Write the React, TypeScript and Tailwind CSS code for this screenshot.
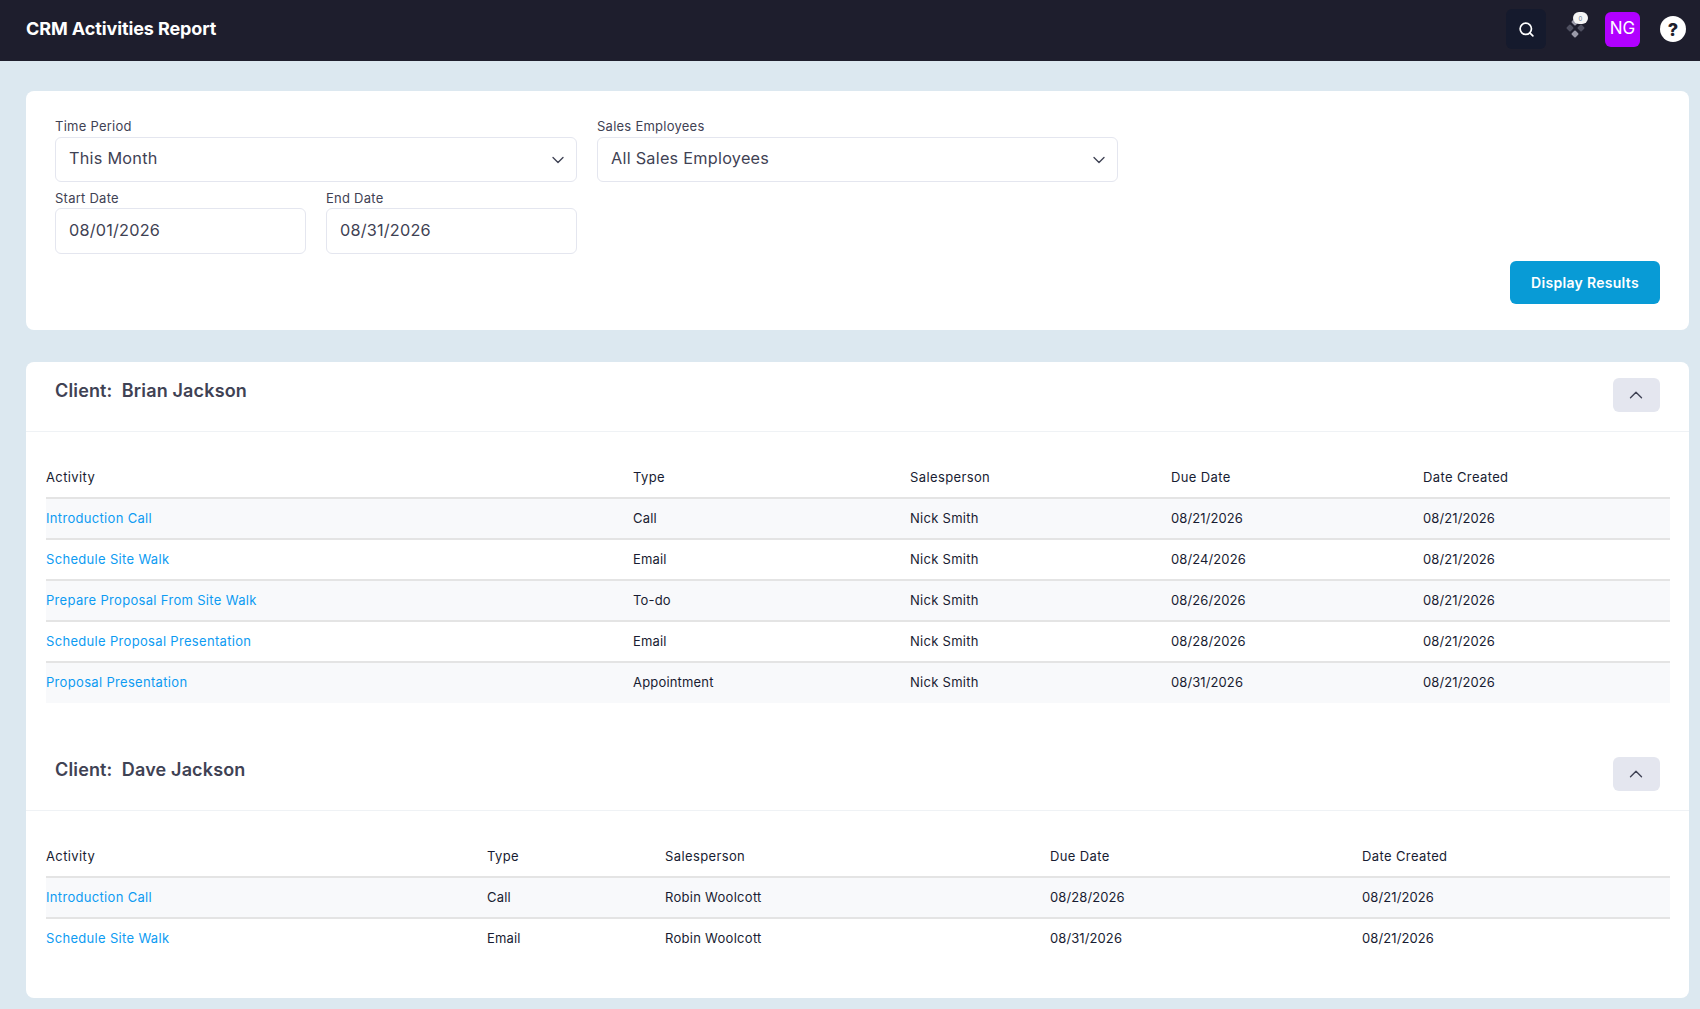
import React from "react";
import { ChevronDown, ChevronUp, Search } from "lucide-react";

const font = "font-['Inter','Liberation_Sans',sans-serif]";

type Row = [string, string, string, string, string];

const brian: Row[] = [
  ["Introduction Call", "Call", "Nick Smith", "08/21/2026", "08/21/2026"],
  ["Schedule Site Walk", "Email", "Nick Smith", "08/24/2026", "08/21/2026"],
  ["Prepare Proposal From Site Walk", "To-do", "Nick Smith", "08/26/2026", "08/21/2026"],
  ["Schedule Proposal Presentation", "Email", "Nick Smith", "08/28/2026", "08/21/2026"],
  ["Proposal Presentation", "Appointment", "Nick Smith", "08/31/2026", "08/21/2026"],
];
const dave: Row[] = [
  ["Introduction Call", "Call", "Robin Woolcott", "08/28/2026", "08/21/2026"],
  ["Schedule Site Walk", "Email", "Robin Woolcott", "08/31/2026", "08/21/2026"],
];

function SelectField({ label, value, className }: { label: string; value: string; className: string }) {
  return (
    <div className={className}>
      <div className="-mt-[1px] text-[13px] leading-[18px] tracking-[0.25px] text-[#3f4254]">{label}</div>
      <div className="mt-[2px] flex h-[45px] items-center justify-between rounded-[6px] border border-[#e4e6ef] bg-white pl-[13px] pr-[8px] text-[16.25px] tracking-[0.25px] text-[#3f4254]">
        <span className="pb-[2px]">{value}</span>
        <ChevronDown size={20} strokeWidth={1.6} className="text-[#3f4254]" />
      </div>
    </div>
  );
}

function DateField({ label, value }: { label: string; value: string }) {
  return (
    <div className="w-[251px]">
      <div className="text-[13px] leading-[18px] tracking-[0.25px] text-[#3f4254]">{label}</div>
      <div className="mt-[1px] flex h-[46px] items-center rounded-[6px] border border-[#e4e6ef] bg-white pl-[13px] text-[16.25px] tracking-[0.2px] text-[#3f4254]">
        <span className="pb-[1px]">{value}</span>
      </div>
    </div>
  );
}

function ActivityTable({ rows, cols }: { rows: Row[]; cols: number[] }) {
  return (
    <table className="w-full table-fixed border-collapse text-[13px] text-[#181c32]">
      <colgroup>
        {cols.map((w, i) => (
          <col key={i} style={{ width: w }} />
        ))}
      </colgroup>
      <thead>
        <tr className="h-[37px] border-b-2 border-[#e4e4e4]">
          {["Activity", "Type", "Salesperson", "Due Date", "Date Created"].map((h) => (
            <th key={h} className="p-0 pb-[2px] text-left font-normal tracking-[0.38px]">{h}</th>
          ))}
        </tr>
      </thead>
      <tbody>
        {rows.map((r, i) => (
          <tr key={i} className={`h-[41px] ${i < rows.length - 1 ? "border-b-2 border-[#e4e4e4]" : ""} ${i % 2 === 0 ? "bg-[#f8f9fb]" : "bg-white"}`}>
            <td className="p-0 tracking-[0.32px] text-[#0d9bf2]">{r[0]}</td>
            <td className="p-0 tracking-[0.18px]">{r[1]}</td>
            <td className="p-0 tracking-[0.28px]">{r[2]}</td>
            <td className="p-0 tracking-[0.1px]">{r[3]}</td>
            <td className="p-0 tracking-[0.1px]">{r[4]}</td>
          </tr>
        ))}
      </tbody>
    </table>
  );
}

function ClientHeader({ name }: { name: string }) {
  return (
    <div className="flex h-[70px] items-start justify-between border-b border-[#eff2f5] px-[29px]">
      <h3 className="mt-[16px] whitespace-pre text-[18px] font-semibold leading-[26px] tracking-[0.15px] text-[#3f4254]">{`Client:  ${name}`}</h3>
      <button className="mt-[16px] flex h-[34px] w-[47px] items-center justify-center rounded-[6px] bg-[#e4e6ef] pr-[1px] text-[#3f4254]">
        <ChevronUp size={22} strokeWidth={1.5} />
      </button>
    </div>
  );
}

export default function App() {
  return (
    <div className={`${font} min-h-[1009px] bg-[#dce8f0]`}>
      <header className="flex h-[61px] items-center justify-between bg-[#1e1e2d] pb-[3px] pl-[26px] pr-[14px]">
        <h1 className="-mt-[2px] text-[18px] font-bold tracking-[-0.1px] text-white">CRM Activities Report</h1>
        <div className="flex items-center">
          <button className="flex h-[40px] w-[40px] items-center justify-center rounded-[6px] bg-[#151a2d] text-white">
            <Search size={17} strokeWidth={2.4} />
          </button>
          <div className="relative ml-[14px] h-[32px] w-[32px]">
            <svg width="32" height="32" viewBox="0 0 32 32" className="absolute left-0 top-0">
              <rect x="12.25" y="6.25" width="5.5" height="5.5" rx="1" transform="rotate(45 15 9)" fill="#9a9aa8" />
              <rect x="7.25" y="12.25" width="5.5" height="5.5" rx="1" transform="rotate(45 10 15)" fill="#4f5060" />
              <rect x="18.25" y="12.25" width="5.5" height="5.5" rx="1" transform="rotate(45 21 15)" fill="#4f5060" />
              <rect x="12.25" y="18.25" width="5.5" height="5.5" rx="1" transform="rotate(45 15 21)" fill="#9a9aa8" />
            </svg>
            <span className="absolute left-[13px] top-[-1px] flex h-[12px] w-[15px] items-center justify-center rounded-full bg-[#f5f5f5] text-[6px] text-[#64748b]">0</span>
          </div>
          <div className="ml-[13px] flex h-[35px] w-[35px] items-center justify-center rounded-[6px] bg-[#b100ff] text-[17px] text-white">NG</div>
          <div className="ml-[20px] flex h-[26px] w-[26px] items-center justify-center rounded-full bg-white text-[18px] font-extrabold text-[#1e1e2d]">?</div>
        </div>
      </header>

      <main className="pl-[26px] pr-[11px] pt-[30px]">
        <section className="h-[239px] rounded-[8px] bg-white px-[29px] pt-[27px]">
          <div className="flex gap-[20px]">
            <div className="w-[522px]">
              <SelectField label="Time Period" value="This Month" className="w-full" />
              <div className="mt-[7px] flex gap-[20px]">
                <DateField label="Start Date" value="08/01/2026" />
                <DateField label="End Date" value="08/31/2026" />
              </div>
            </div>
            <SelectField label="Sales Employees" value="All Sales Employees" className="w-[521px]" />
          </div>
          <div className="mt-[7px] flex justify-end">
            <button className="h-[43px] w-[150px] rounded-[6px] bg-[#089bd6] pb-[1px] text-[14px] font-semibold tracking-[0.3px] text-white">Display Results</button>
          </div>
        </section>

        <section className="mt-[32px] h-[636px] rounded-[8px] bg-white">
          <ClientHeader name="Brian Jackson" />
          <div className="pl-[20px] pr-[19px] pt-[29px]">
            <ActivityTable rows={brian} cols={[587, 277, 261, 252, 247]} />
          </div>
          <div className="mt-[38px]">
            <ClientHeader name="Dave Jackson" />
          </div>
          <div className="pl-[20px] pr-[19px] pt-[29px]">
            <ActivityTable rows={dave} cols={[441, 178, 385, 312, 308]} />
          </div>
        </section>
      </main>
    </div>
  );
}
